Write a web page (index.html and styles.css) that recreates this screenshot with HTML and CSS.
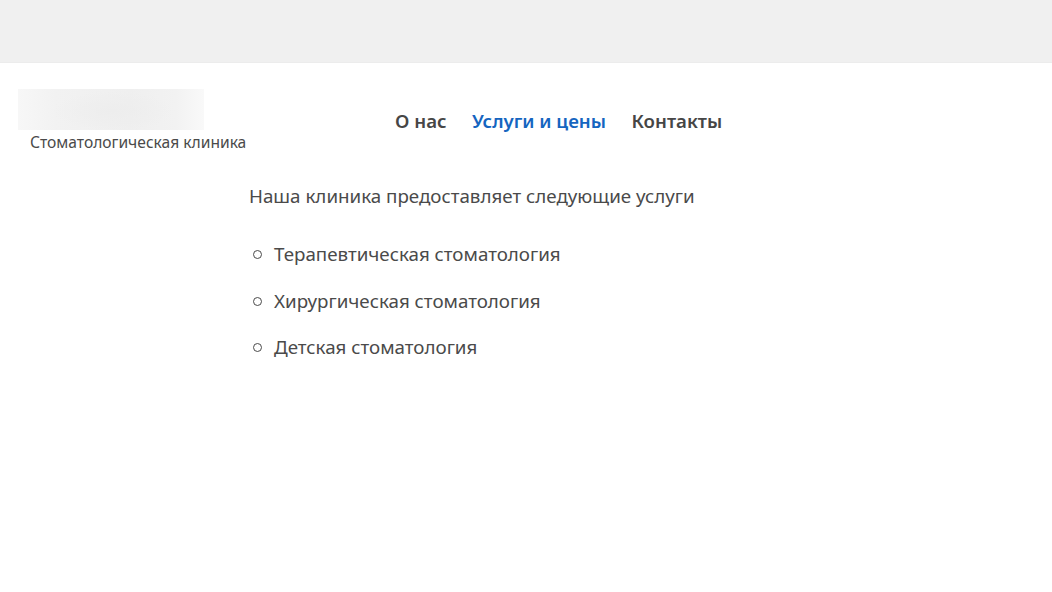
FILE: index.html
```html
<!DOCTYPE html>
<html lang="ru">
<head>
<meta charset="utf-8">
<title>Услуги и цены</title>
<link rel="stylesheet" href="styles.css">
</head>
<body>
<div class="topbar"></div>
<header class="header">
  <div class="brand">
    <div class="logo"></div>
    <div class="tagline">Стоматологическая клиника</div>
  </div>
  <nav class="nav">
    <a class="nav-link" href="#">О нас</a>
    <a class="nav-link active" href="#">Услуги и цены</a>
    <a class="nav-link" href="#">Контакты</a>
  </nav>
</header>
<main class="content">
  <p class="intro">Наша клиника предоставляет следующие услуги</p>
  <ul class="services">
    <li>Терапевтическая стоматология</li>
    <li>Хирургическая стоматология</li>
    <li>Детская стоматология</li>
  </ul>
</main>
</body>
</html>
```
FILE: styles.css
```css
* { box-sizing: border-box; }
html, body { margin: 0; padding: 0; }
body {
  background: #fff;
  color: #4a4a4a;
  font-family: "Noto Sans", "Open Sans", sans-serif;
  font-size: 18.75px;
  height: 592px;
  overflow: hidden;
}
.topbar {
  height: 63px;
  background: #f0f0f0;
  border-bottom: 1px solid #ececec;
}
.header {
  display: flex;
  padding: 26px 0 0 18px;
}
.brand { width: 228px; flex: none; }
.logo {
  width: 186px;
  height: 41px;
  background:
    radial-gradient(ellipse 60px 20px at 95px 22px, #ededed 0%, rgba(237, 237, 237, 0) 100%),
    linear-gradient(90deg, #f7f7f7 0%, #f2f2f2 20%, #efefef 60%, #f2f2f2 85%, #f9f9f9 100%);
}
.tagline {
  font-size: 15.6px;
  line-height: 24px;
  margin: 0 0 0 12px;
  white-space: nowrap;
}
.nav {
  display: flex;
  gap: 25.5px;
  margin-left: 149px;
  padding-top: 20px;
}
.nav-link {
  font-size: 18.65px;
  font-weight: 600;
  line-height: 24px;
  color: #464646;
  text-decoration: none;
}
.nav-link.active { color: #1565c0; }
.content {
  padding: 28px 0 0 249px;
}
.intro {
  margin: 0;
  line-height: 28px;
}
.services {
  list-style: none;
  margin: 30px 0 0;
  padding: 0 0 0 25px;
}
.services li {
  position: relative;
  line-height: 28px;
  margin-bottom: 18.7px;
}
.services li::before {
  content: "";
  position: absolute;
  left: -21px;
  top: 10px;
  width: 7px;
  height: 7px;
  border: 1px solid #4a4a4a;
  border-radius: 50%;
}
```
